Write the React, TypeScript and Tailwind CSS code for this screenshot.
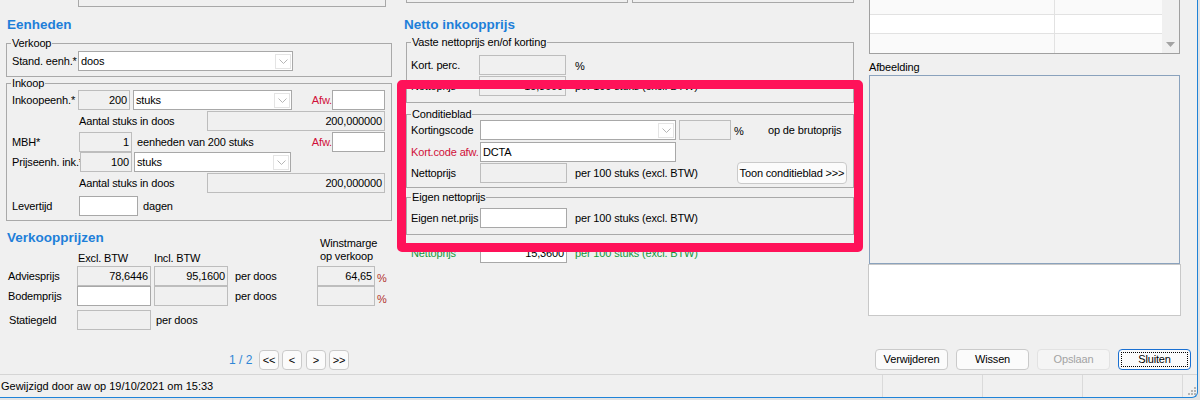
import React from 'react';

const Chev = () => (
  <svg width="9" height="5" viewBox="0 0 9 5">
    <path d="M0.5 0.5L4.5 4.5L8.5 0.5" stroke="#b5b5b5" fill="none" strokeWidth="1" />
  </svg>
);

function Field({
  className = '',
  children,
  ro = false,
  right = false,
}: {
  className?: string;
  children?: React.ReactNode;
  ro?: boolean;
  right?: boolean;
}) {
  return (
    <div
      className={`h-[20px] shrink-0 border flex items-center px-[2px] whitespace-nowrap overflow-hidden ${
        ro ? 'bg-[#f0f0f0] border-[#bdbdbd]' : 'bg-white border-[#a8a8a8]'
      } ${right ? 'justify-end' : ''} ${className}`}
    >
      {children}
    </div>
  );
}

function Combo({ className = '', children }: { className?: string; children?: React.ReactNode }) {
  return (
    <div className={`h-[20px] shrink-0 border border-[#a8a8a8] bg-white flex items-center pl-[2px] pr-[1px] ${className}`}>
      <span className="flex-1 whitespace-nowrap">{children}</span>
      <span className="w-[16px] h-[15px] border border-[#e4e4e4] flex items-center justify-center">
        <Chev />
      </span>
    </div>
  );
}

function Group({
  legend,
  className = '',
  children,
}: {
  legend: string;
  className?: string;
  children?: React.ReactNode;
}) {
  return (
    <fieldset className={`shrink-0 border border-[#a9a9a9] px-[4px] ${className}`}>
      <legend className="px-[1px] leading-[13px]">{legend}</legend>
      {children}
    </fieldset>
  );
}

function Btn({
  className = '',
  children,
  disabled = false,
  focus = false,
}: {
  className?: string;
  children?: React.ReactNode;
  disabled?: boolean;
  focus?: boolean;
}) {
  if (focus) {
    return (
      <div className={`shrink-0 border border-[#1a70d2] rounded-[4px] bg-[#fbfbfb] p-[2px] flex ${className}`}>
        <div className="flex-1 border border-dotted border-black flex items-center justify-center">{children}</div>
      </div>
    );
  }
  return (
    <div
      className={`shrink-0 border rounded-[4px] flex items-center justify-center ${
        disabled ? 'border-[#e2e2e2] bg-[#f5f5f5] text-[#a3a3a3]' : 'border-[#cacaca] bg-[#fbfbfb]'
      } ${className}`}
    >
      {children}
    </div>
  );
}

const H = 'h-[16px] leading-[16px] text-[13.5px] font-bold text-[#1e7fd9] tracking-normal whitespace-nowrap';

export default function App() {
  return (
    <div className="relative w-[1200px] h-[400px] bg-[#e4e4e4] overflow-hidden font-['Liberation_Sans',Arial,sans-serif] text-[11px] leading-[13px] tracking-[-0.15px] text-black">
      <div className="w-[1198px] h-[398px] bg-[#f0f0f0] border-r border-b border-[#1f83d8] rounded-br-[6px] flex flex-col overflow-hidden">
        <div className="flex h-[374px]">
          {/* LEFT COLUMN */}
          <div className="w-[392px] shrink-0 flex flex-col">
            <div className="ml-[78px] w-[308px] h-[7px] shrink-0 border-x border-b border-[#a8a8a8]" />
            <div className={`mt-[10px] ml-[7px] ${H}`}>Eenheden</div>

            <Group legend="Verkoop" className="mt-[4px] ml-[6px] w-[386px] pb-[5px]">
              <div className="mt-[1px] flex items-center h-[20px]">
                <div className="w-[67px] pl-[1px] whitespace-nowrap">Stand. eenh.*</div>
                <Combo className="w-[215px]">doos</Combo>
              </div>
            </Group>

            <Group legend="Inkoop" className="ml-[6px] w-[386px] pb-[4px]">
              <div className="flex items-center h-[20px]">
                <div className="w-[67px] pl-[1px] whitespace-nowrap">Inkoopeenh.*</div>
                <Field ro right className="w-[52px]">200</Field>
                <Combo className="ml-[3px] w-[159px]">stuks</Combo>
                <div className="w-[40px] text-right text-[#d0103a]">Afw.</div>
                <Field className="w-[53px]" />
              </div>
              <div className="mt-[1px] flex items-center h-[20px]">
                <div className="ml-[68px] w-[128px] whitespace-nowrap">Aantal stuks in doos</div>
                <Field ro right className="w-[178px]">200,000000</Field>
              </div>
              <div className="mt-[1px] flex items-center h-[20px]">
                <div className="w-[68px] pl-[1px]">MBH*</div>
                <Field ro right className="w-[53px]">1</Field>
                <div className="ml-[5px] w-[155px] whitespace-nowrap">eenheden van 200 stuks</div>
                <div className="w-[40px] text-right text-[#d0103a]">Afw.</div>
                <Field className="w-[53px]" />
              </div>
              <div className="flex items-center h-[20px]">
                <div className="w-[69px] pl-[1px] whitespace-nowrap overflow-hidden">Prijseenh. ink.*</div>
                <Field ro right className="w-[52px]">100</Field>
                <Combo className="ml-[2px] w-[157px]">stuks</Combo>
              </div>
              <div className="mt-[1px] flex items-center h-[20px]">
                <div className="ml-[68px] w-[128px] whitespace-nowrap">Aantal stuks in doos</div>
                <Field ro right className="w-[178px]">200,000000</Field>
              </div>
              <div className="mt-[3px] flex items-center h-[20px]">
                <div className="w-[68px] pl-[1px]">Levertijd</div>
                <Field className="w-[59px]" />
                <div className="ml-[5px]">dagen</div>
              </div>
            </Group>

            <div className="mt-[9px] flex h-[36px] shrink-0">
              <div className="w-[320px] flex flex-col">
                <div className={`ml-[7px] ${H}`}>Verkoopprijzen</div>
                <div className="mt-auto pb-[1px] flex h-[14px]">
                  <span className="ml-[78px] w-[76px] whitespace-nowrap">Excl. BTW</span>
                  <span className="whitespace-nowrap">Incl. BTW</span>
                </div>
              </div>
              <div className="pt-[7px] flex flex-col whitespace-nowrap">
                <span>Winstmarge</span>
                <span>op verkoop</span>
              </div>
            </div>
            <div className="flex items-center h-[20px] shrink-0">
              <div className="ml-[8px] w-[69px]">Adviesprijs</div>
              <Field ro right className="w-[74px]">78,6446</Field>
              <Field ro right className="ml-[3px] w-[74px]">95,1600</Field>
              <div className="ml-[7px] w-[82px]">per doos</div>
              <Field ro right className="w-[58px]">64,65</Field>
              <div className="ml-[2px] mt-[4px] text-[#b0302a]">%</div>
            </div>
            <div className="flex items-center h-[20px] shrink-0">
              <div className="ml-[8px] w-[69px]">Bodemprijs</div>
              <Field className="w-[74px]" />
              <Field ro className="ml-[3px] w-[74px]" />
              <div className="ml-[7px] w-[82px]">per doos</div>
              <Field ro className="w-[58px]" />
              <div className="ml-[2px] mt-[6px] text-[#b0302a]">%</div>
            </div>
            <div className="mt-[4px] flex items-center h-[20px] shrink-0">
              <div className="ml-[9px] w-[68px]">Statiegeld</div>
              <Field ro className="w-[74px]" />
              <div className="ml-[5px]">per doos</div>
            </div>

            <div className="mt-[20px] flex items-center h-[20px] shrink-0">
              <span className="ml-[229px] w-[30px] text-[12px] tracking-normal text-[#2f86d6] whitespace-nowrap">1 / 2</span>
              <Btn className="w-[20px] h-[20px]">&lt;&lt;</Btn>
              <Btn className="ml-[3px] w-[20px] h-[20px]">&lt;</Btn>
              <Btn className="ml-[4px] w-[20px] h-[20px]">&gt;</Btn>
              <Btn className="ml-[3px] w-[20px] h-[20px]">&gt;&gt;</Btn>
            </div>
          </div>

          {/* MIDDLE COLUMN */}
          <div className="w-[470px] shrink-0 flex flex-col">
            <div className="flex h-[3px] shrink-0">
              <div className="ml-[14px] w-[222px] border-x border-b border-[#a8a8a8]" />
              <div className="ml-[4px] w-[222px] border-x border-b border-[#a8a8a8]" />
            </div>
            <div className={`mt-[14px] ml-[12px] ${H}`}>Netto inkoopprijs</div>

            <Group legend="Vaste nettoprijs en/of korting" className="mt-[3px] ml-[14px] w-[448px] pb-[6px]">
              <div className="mt-[6px] flex items-center h-[20px]">
                <div className="w-[68px]">Kort. perc.</div>
                <Field ro className="w-[87px]" />
                <div className="ml-[9px] mt-[3px]">%</div>
              </div>
              <div className="mt-[1px] flex items-center h-[20px]">
                <div className="w-[68px]">Nettoprijs</div>
                <Field ro right className="w-[87px]">15,3600</Field>
                <div className="ml-[9px] whitespace-nowrap">per 100 stuks (excl. BTW)</div>
              </div>
            </Group>

            <Group legend="Conditieblad" className="mt-[5px] ml-[14px] w-[448px] pb-[3px]">
              <div className="-mt-[1px] flex items-center h-[20px]">
                <div className="w-[69px]">Kortingscode</div>
                <Combo className="w-[196px]" />
                <Field ro className="ml-[3px] w-[52px]" />
                <div className="ml-[3px] w-[34px] mt-[2px]">%</div>
                <div className="whitespace-nowrap">op de brutoprijs</div>
              </div>
              <div className="mt-[2px] flex items-center h-[20px]">
                <div className="w-[69px] text-[#d0103a] whitespace-nowrap">Kort.code afw.</div>
                <Field className="w-[196px]">DCTA</Field>
              </div>
              <div className="flex items-center h-[22px]">
                <div className="w-[69px]">Nettoprijs</div>
                <Field ro className="w-[87px]" />
                <div className="ml-[8px] w-[162px] whitespace-nowrap">per 100 stuks (excl. BTW)</div>
                <Btn className="w-[110px] h-[22px] whitespace-nowrap">Toon conditieblad &gt;&gt;&gt;</Btn>
              </div>
            </Group>

            <Group legend="Eigen nettoprijs" className="mt-[3px] ml-[14px] w-[448px] pb-[6px]">
              <div className="mt-[4px] flex items-center h-[20px]">
                <div className="w-[69px] whitespace-nowrap">Eigen net.prijs</div>
                <Field className="w-[87px]" />
                <div className="ml-[8px] whitespace-nowrap">per 100 stuks (excl. BTW)</div>
              </div>
            </Group>

            <div className="mt-[8px] flex items-center h-[20px] shrink-0">
              <div className="ml-[19px] w-[69px] text-[#17953b]">Nettoprijs</div>
              <Field right className="w-[87px]">15,3600</Field>
              <div className="ml-[8px] text-[#17953b] whitespace-nowrap">per 100 stuks (excl. BTW)</div>
            </div>
          </div>

          {/* RIGHT COLUMN */}
          <div className="w-[335px] shrink-0 flex flex-col">
            <div className="ml-[7px] w-[311px] h-[54px] shrink-0 border-x border-b border-[#a0a0a0] flex">
              <div className="flex-1 flex flex-col">
                <div className="h-[15px] border-b border-[#e2e2e2] bg-[#fafafa] flex">
                  <div className="w-[185px] border-r border-[#e2e2e2]" />
                </div>
                <div className="h-[19px] border-b border-[#e2e2e2] bg-white flex">
                  <div className="w-[185px] border-r border-[#e2e2e2]" />
                </div>
                <div className="flex-1 bg-[#fafafa] flex">
                  <div className="w-[185px] border-r border-[#e2e2e2]" />
                </div>
              </div>
              <div className="w-[17px] bg-[#f0f0f0] flex flex-col justify-end items-center pb-[6px]">
                <svg width="9" height="5" viewBox="0 0 9 5">
                  <path d="M0 0H9L4.5 5Z" fill="#a3a3a3" />
                </svg>
              </div>
            </div>
            <div className="mt-[7px] ml-[7px] h-[13px]">Afbeelding</div>
            <div className="mt-[1px] ml-[7px] w-[311px] h-[189px] shrink-0 border border-[#8aa2bd] bg-[#f0f0f0]" />
            <div className="ml-[6px] w-[313px] h-[52px] shrink-0 border border-[#c8c8c8] bg-white" />
            <div className="mt-[33px] ml-[13px] flex gap-[8px]">
              <Btn className="w-[73px] h-[21px]">Verwijderen</Btn>
              <Btn className="w-[73px] h-[21px]">Wissen</Btn>
              <Btn disabled className="w-[73px] h-[21px]">Opslaan</Btn>
              <Btn focus className="w-[73px] h-[21px]">Sluiten</Btn>
            </div>
          </div>
        </div>

        {/* STATUS BAR */}
        <div className="h-[23px] border-t border-[#d5d5d5] flex shrink-0">
          <div className="w-[882px] flex items-center pl-[1px] tracking-normal whitespace-nowrap">
            Gewijzigd door aw op 19/10/2021 om 15:33
          </div>
          <div className="w-[100px] border-l border-[#dadada]" />
          <div className="w-[100px] border-l border-[#dadada]" />
          <div className="w-[100px] border-l border-[#dadada]" />
          <div className="w-[15px] border-l border-[#dadada] flex items-end justify-end pb-[1px]">
            <svg width="9" height="9" viewBox="0 0 9 9">
              <rect x="6" y="0" width="2" height="2" fill="#b4b4b4" />
              <rect x="3" y="3" width="2" height="2" fill="#b4b4b4" />
              <rect x="6" y="3" width="2" height="2" fill="#b4b4b4" />
              <rect x="0" y="6" width="2" height="2" fill="#b4b4b4" />
              <rect x="3" y="6" width="2" height="2" fill="#b4b4b4" />
              <rect x="6" y="6" width="2" height="2" fill="#b4b4b4" />
            </svg>
          </div>
        </div>
      </div>

      {/* highlight overlay */}
      <div className="absolute left-[397px] top-[80px] w-[466px] h-[172px] border-[9px] border-[#ff1259] rounded-[5px] pointer-events-none" />
    </div>
  );
}
